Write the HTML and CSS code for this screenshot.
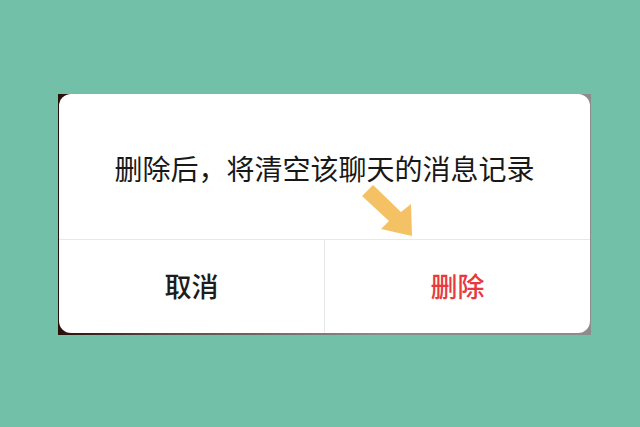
FILE: index.html
```html
<!DOCTYPE html>
<html lang="zh-CN">
<head>
  <meta charset="UTF-8">
  <title>删除聊天记录</title>
  <meta name="viewport" content="width=device-width, initial-scale=1.0">
  <link rel="stylesheet" href="styles.css">
</head>
<body>
  <div class="shot">
    <div class="dialog">
      <div class="dialog-msg">删除后，将清空该聊天的消息记录</div>
      <div class="dialog-actions">
        <button class="btn btn-cancel">取消</button>
        <button class="btn btn-delete">删除</button>
      </div>
      <!-- hint arrow pointing at the delete button -->
      <svg class="hint-arrow" width="60" height="56" viewBox="0 0 60 56">
        <polygon points="12,0 1,11 28,36 20,44 51,51 50,19 40,27" fill="#f4c165"/>
      </svg>
    </div>
  </div>
</body>
</html>
```

FILE: styles.css
```css
body {
  margin: 0;
  background: #72c0a8;
  font-family: "Noto Sans CJK SC", "Noto Sans", sans-serif;
  color: #1c1c1c;
  padding: 92px 0 0 58px;
}
.shot {
  width: 533px;
  height: 241px;
  background: linear-gradient(90deg, #2a100a 0%, #5a4a46 20%, #8a8a8a 60%, #8c8c8c 100%);
}
.dialog {
  position: relative;
  margin: 2px 0 0 1px;
  width: 531px;
  height: 239px;
  background: #fff;
  border-radius: 12px;
  display: flex;
  flex-direction: column;
}
.dialog-msg {
  height: 146px;
  box-sizing: border-box;
  padding-top: 54px;
  text-align: center;
  font-size: 28px;
  line-height: 40px;
  color: #181818;
  border-bottom: 1px solid #e8e8e8;
}
.dialog-actions {
  flex: 1;
  display: flex;
}
.btn {
  flex: 1;
  border: none;
  background: none;
  font-family: inherit;
  font-size: 27px;
  font-weight: 500;
  padding: 0 0 2px;
  cursor: pointer;
}
.btn-cancel {
  color: #1c1c1c;
  border-right: 1px solid #e8e8e8;
}
.btn-delete {
  color: #e8393e;
}
.hint-arrow {
  position: absolute;
  left: 302px;
  top: 91px;
}
```
